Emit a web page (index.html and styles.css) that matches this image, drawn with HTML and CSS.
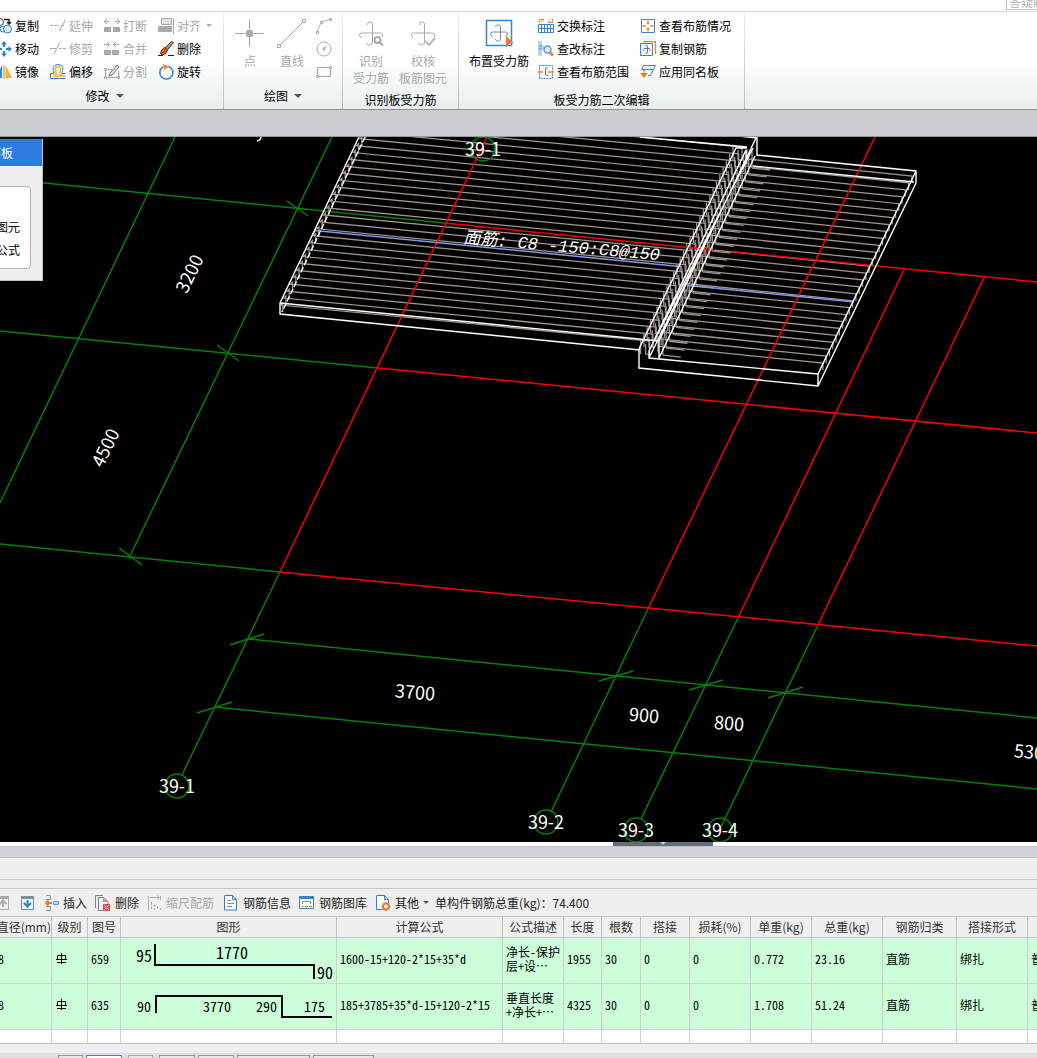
FILE: index.html
```html
<!DOCTYPE html>
<html lang="zh-CN">
<head>
<meta charset="utf-8">
<title>板受力筋</title>
<link rel="stylesheet" href="styles.css">
</head>
<body>
<header class="topbar"><button class="search">答疑解</button></header>

<nav class="ribbon">
  <section class="group group-modify">
    <div class="tools modify-grid">
      <button class="tool"><svg class="icon-cut" viewBox="4 0 12 16" fill="none"><circle cx="4" cy="4" r="3.500" stroke="#3d4a55"/><circle cx="7" cy="11" r="3" fill="#d6ecfa" stroke="#3c87c8"/><circle cx="11.500" cy="11" r="4" fill="#d6ecfa" stroke="#2f7cc0"/><path d="M8 1.500h5V5M11 4l2 2 2-2" stroke="#222" stroke-width="1.500"/></svg>复制</button>
      <button class="tool" disabled><svg class="icon" viewBox="0 0 16 16" fill="none" stroke="#a9a9a9"><path d="M0 7.500h9" stroke-dasharray="3 1"/><path d="M9.500 13L15.500 2M11 7.500h3"/></svg>延伸</button>
      <button class="tool" disabled><svg class="icon" viewBox="0 0 16 16" fill="#a9a9a9"><path d="M0 9h7v5H0zM9 9h7v5H9z"/><path d="M0 3.500h5M3 1L0.500 3.500L3 6M16 3.500h-5M13 1l2.500 2.500L13 6" fill="none" stroke="#a9a9a9"/></svg>打断</button>
      <button class="tool" disabled><svg class="icon" viewBox="0 0 16 16"><path d="M3.500.500h10v6h-10z" fill="#e3e3e3" stroke="#a9a9a9"/><path d="M0 8h14v6H0z" fill="#a9a9a9"/><path d="M15.500 0v16" stroke="#a9a9a9"/></svg>对齐<i class="caret caret-off"></i></button>

      <button class="tool"><svg class="icon-cut" viewBox="4 0 12 16" fill="#2f80d0"><path d="M8 0l3 3.500H9V6H7V3.500H5zM8 16l-3-3.500h2V10h2v2.500h2zM16 8l-3.500 3V9H10V7h2.500V5zM0 8l3.500-3v2H6v2H3.500v2z"/></svg>移动</button>
      <button class="tool" disabled><svg class="icon" viewBox="0 0 16 16" fill="none" stroke="#a9a9a9"><path d="M0 7.500h6M4 13L9.500 2"/><path d="M9 7.500h7" stroke-dasharray="3 1"/></svg>修剪</button>
      <button class="tool" disabled><svg class="icon" viewBox="0 0 16 16" fill="#a9a9a9"><path d="M0 9h7v5H0zM8 9h7v5H8z"/><path d="M0 3.500h5M3 1l2.500 2.500L3 6M15 3.500H9M12 1L9.500 3.500L12 6" fill="none" stroke="#a9a9a9"/></svg>合并</button>
      <button class="tool"><svg class="icon" viewBox="0 0 16 16"><path d="M13.500.500l2 1L9.500 9 7 7z" fill="#b9905f" stroke="#3c3028"/><path d="M6.500 6.500l3 3-2 3-3 1.500-2-1 1-4z" fill="#d8541b" stroke="#5a3320"/><path d="M0 14.500h5M10 14.500h6" stroke="#222"/></svg>删除</button>

      <button class="tool"><svg class="icon-cut" viewBox="4 0 12 16"><path d="M6 1v13H0z" fill="#3684d8"/><path d="M8 1v14" stroke="#8c969f"/><path d="M9.500 1l6.500 13H9.500z" fill="#fbb216"/></svg>镜像</button>
      <button class="tool"><svg class="icon" viewBox="0 0 16 16" fill="none"><path d="M15.500 14.500H.500V9.500H4C4 7 3 6 3 5a5 4.500 0 0 1 10 0c0 1-1 2-1 4.500h3.500" stroke="#2f7cd0"/><path d="M15.500 12H3.500M3.500 11.500c3 0 3-1.500 2.500-3.500C5.500 7 5.500 6 5.500 5a2.500 2.500 0 0 1 5 0c0 1 0 2-.500 3-.500 2 1 3.500 2.500 3.500" stroke="#fbb216" stroke-width="1.500"/></svg>偏移</button>
      <button class="tool" disabled><svg class="icon" viewBox="0 0 16 16" fill="none" stroke="#a9a9a9"><path d="M1.500 13.500v-8H8M1.500 13.500h13V7"/><path d="M.500 12.500h2v2h-2zM13.500 12.500h2v2h-2zM.500 4.500h2v2h-2z" fill="#fff"/><path d="M13 1l2 2-7 8-3 1 1-3z" fill="#ddd" stroke="#777"/></svg>分割</button>
      <button class="tool"><svg class="icon" viewBox="0 0 16 16" fill="none"><path d="M10 2.300a6.500 6.500 0 1 1-5 .700" stroke="#3684d8" stroke-width="1.500"/><path d="M5 0l6 2.500L6 6z" fill="#f58220"/></svg>旋转</button>
    </div>
    <p class="caption">修改<i class="caret"></i></p>
  </section>

  <section class="group group-draw">
    <div class="tools draw-row">
      <button class="big" disabled><svg class="icon-big" viewBox="0 0 30 30" stroke="#a9a9a9"><path d="M14.500 1v10M14.500 19v10M0 15.500h10M19 15.500h10"/><circle cx="14.500" cy="15.500" r="3.500" fill="#a9a9a9"/></svg>点</button>
      <button class="big" disabled><svg class="icon-big" viewBox="0 0 30 30" fill="none" stroke="#a9a9a9"><path d="M3 27L27 3"/><path d="M.500 26.500h3v3h-3zM25.500 1.500h3v3h-3z" fill="#fff"/></svg>直线</button>
      <div class="shapes">
        <button class="mini" aria-label="弧" disabled><svg class="icon" viewBox="0 0 16 16" fill="none" stroke="#a9a9a9"><path d="M1.500 14C2 7 7 2 14 1.500"/><path d="M.500 13.500h2v2h-2zM4.500 3.500h2v2h-2zM13.500.500h2v2h-2z" fill="#fff"/></svg></button>
        <button class="mini" aria-label="圆" disabled><svg class="icon" viewBox="0 0 16 16" fill="none" stroke="#a9a9a9"><circle cx="8" cy="8" r="7"/><path d="M8 8l3-3M7 7h2v2H7z"/></svg></button>
        <button class="mini" aria-label="矩形" disabled><svg class="icon" viewBox="0 0 16 16" fill="none" stroke="#a9a9a9"><path d="M1.500 3.500h13v9h-13z"/><path d="M.500 11.500h2v2h-2zM13.500 2.500h2v2h-2z" fill="#fff"/></svg></button>
      </div>
    </div>
    <p class="caption">绘图<i class="caret"></i></p>
  </section>

  <section class="group group-check">
    <div class="tools check-row">
      <button class="big" disabled><svg class="icon-big" viewBox="0 0 30 30" fill="none" stroke="#a9a9a9"><path d="M11.500 7q0-3 2-3h1q2 0 2 2v15M5.500 20q-2-1-2-3t2-2h19q2 0 2 2v2M16.500 20v4q0 3-3 3t-3-2"/><circle cx="21.500" cy="22" r="3" stroke-width="2"/><path d="M24 24.500l3 3" stroke-width="2"/></svg>识别<br>受力筋</button>
      <button class="big" disabled><svg class="icon-big" viewBox="0 0 30 30" fill="none" stroke="#a9a9a9"><path d="M11.500 7q0-3 2-3h1q2 0 2 2v15M5.500 20q-2-1-2-3t2-2h19q2 0 2 2v2M16.500 20v4q0 3-3 3t-3-2"/><path d="M17 23l4 4 6-7" stroke="#bbb" stroke-width="2"/></svg>校核<br>板筋图元</button>
    </div>
    <p class="caption caption-low">识别板受力筋</p>
  </section>

  <section class="group group-edit">
    <div class="tools edit-row">
      <button class="big"><svg class="icon-big" viewBox="0 0 30 30" fill="none"><path d="M2.500 2.500h25v25h-25z" fill="#fff" stroke="#3684d8" stroke-width="1.500"/><path d="M11.500 9q0-2 2-2h1q2 0 2 2v12q0 2-2 2h-1q-2 0-2-2M8.500 18.500q-2-1-2-2.500t2-2h13q2 0 2 2t-2 2.500" stroke="#7d878f"/><path d="M22 18l8 7-4 .500-4 4z" fill="#f0782a"/></svg>布置受力筋</button>
      <div class="edit-grid">
        <button class="tool"><svg class="icon" viewBox="0 0 16 16" fill="none"><path d="M.500 6.500h15v8H.500zM.500 10.500h15M3.500 7v8M6.500 7v8M9.500 7v8M12.500 7v8" stroke="#3684d8"/><path d="M1.500 5V1.500H6L3.500 4M14.500 1v3.500H10L13 1.500" stroke="#f58220"/></svg>交换标注</button>
        <button class="tool"><svg class="icon" viewBox="0 0 16 16" fill="none"><path d="M1.500 1.500h13v13h-13z" stroke="#3684d8"/><path d="M8 2.500v3.500M8 10v3.500M2.500 8H6M10 8h3.500" stroke="#f58220" stroke-width="1.500"/><path d="M6.500 4.500L8 6.500l1.500-2M6.500 11.500L8 9.500l1.500 2" stroke="#f58220"/></svg>查看布筋情况</button>
        <button class="tool"><svg class="icon" viewBox="0 0 16 16" fill="none"><path d="M0 0h4v4l2 1v3L4 9v6H0z" fill="#b8d2f2"/><path d="M1 5h3M1 8h3" stroke="#3684d8"/><circle cx="9.500" cy="8.500" r="3.500" fill="#dcecfc" stroke="#6397d6" stroke-width="1.500"/><path d="M12 11.500l3 3" stroke="#f58220" stroke-width="3"/></svg>查改标注</button>
        <button class="tool"><svg class="icon" viewBox="0 0 16 16" fill="none"><path d="M3 .500h12.500V13" stroke="#f58220" stroke-width="1.500"/><path d="M.500 2.500h12v12H.500z" fill="#fff" stroke="#3684d8"/><path d="M5.500 5q2-1.500 2 1v5q0 2-2 1M4 10q-1.500-2 0-2.500h5q2 0 .500 2.500" stroke="#69737c"/></svg>复制钢筋</button>
        <button class="tool"><svg class="icon" viewBox="0 0 16 16" fill="none"><path d="M1.500 1.500h13v13h-13z" stroke="#3684d8" stroke-dasharray="2 1"/><path d="M0 8h5M10 8h6" stroke="#f58220" stroke-width="1.500"/><path d="M10 4Q7 3 7.500 6v5q1 1 3 0" stroke="#69737c"/></svg>查看布筋范围</button>
        <button class="tool"><svg class="icon" viewBox="0 0 16 16" fill="none"><path d="M3.500 1.500h12l-2 4H1.500z" fill="#eaf3fd" stroke="#3684d8"/><path d="M13.500 5.500l-3 6H8M4 5v5" stroke="#3684d8"/><path d="M0 9h8l-4 5z" fill="#f58220"/></svg>应用同名板</button>
      </div>
    </div>
    <p class="caption caption-low">板受力筋二次编辑</p>
  </section>
</nav>
<div class="band"></div>

<main class="viewport">
  <svg class="scene" viewBox="0 137 1037 705">
    <defs>
      <g id="a1"><path d="M375 118v-9l-2 2 369 36v13M733 147v13M738 150v10h5"/></g>
      <g id="a2"><use href="#a1"/><use href="#a1" x="-3.300" y="6.930"/></g>
      <g id="a4"><use href="#a2"/><use href="#a2" x="-6.600" y="13.860"/></g>
      <g id="a8"><use href="#a4"/><use href="#a4" x="-13.200" y="27.720"/></g>
      <g id="a16"><use href="#a8"/><use href="#a8" x="-26.400" y="55.440"/></g>
      <g id="b1"><path d="M747 149v16M752 150v18M747 159l165 17v7M752 168l18 2"/></g>
      <g id="b2"><use href="#b1"/><use href="#b1" x="-3.300" y="6.930"/></g>
      <g id="b4"><use href="#b2"/><use href="#b2" x="-6.600" y="13.860"/></g>
      <g id="b8"><use href="#b4"/><use href="#b4" x="-13.200" y="27.720"/></g>
      <g id="b16"><use href="#b8"/><use href="#b8" x="-26.400" y="55.440"/></g>
    </defs>
    <g class="bars">
      <use href="#a16"/><use href="#a8" x="-52.800" y="110.880"/><use href="#a4" x="-79.200" y="166.320"/><use href="#a1" x="-92.400" y="194.040"/>
      <use href="#b16"/><use href="#b8" x="-52.800" y="110.880"/><use href="#b4" x="-79.200" y="166.320"/>
    </g>
    <g class="green">
      <path d="M0 178.500L447 223.300M0 331L378 368M0 544L280 572M248 639L1037 718M215 707L1037 789"/>
      <path d="M175 137L0 503M332 137L129 558M280 572L182 775M648 609L551 812M738 618L641 819M818 625L720 829"/>
      <path d="M287 201l21 15M217 345l22 16M119 548l23 17M230 645l34-11M197 713l35-11M599 681l34-10M689 690l34-10M768 698l35-11"/>
    </g>
    <g class="red">
      <path d="M447 223.300L714 250M731 251.500L1037 282M378 368L1037 433M280 572L1037 646"/>
      <path d="M487 137L280 572M875 137L648 609M905 268L738 618M985 276L818 625"/>
    </g>
    <path class="blue" d="M313 235l2-4.500L682 266.700M688 285.500L854 302"/>
    <g class="white">
      <path d="M359 137L280 303v11L640 350M280 303L659 341M640 137L747 147M700 132L757 138v17L916 171v12L818 386L639 368v-19L736 148h11M916 171L818 374v12M753 166L914 182M818 374L649 358v-7L746 150v14M659 341v17L755 156M659 341L756 138M649 351L753 148M649 358L749 154"/>
      <path d="M365 137L282 312" stroke-dasharray="6 2"/>
    </g>
    <g class="marks">
      <circle cx="483" cy="149" r="12"/><circle cx="177" cy="786" r="12"/><circle cx="546" cy="822" r="12"/><circle cx="636" cy="830" r="12"/><circle cx="720" cy="830" r="12"/>
    </g>
    <g class="labels">
      <text x="483" y="156">39-1</text><text x="177" y="793">39-1</text><text x="546" y="829">39-2</text><text x="636" y="837">39-3</text><text x="720" y="837">39-4</text>
      <text transform="translate(415 693) rotate(5)" y="6">3700</text>
      <text transform="translate(644 716) rotate(5)" y="6">900</text>
      <text transform="translate(729 724) rotate(5)" y="6">800</text>
      <text transform="translate(1034 753) rotate(5)" y="6">5300</text>
      <text transform="translate(190 274) rotate(-64)" y="6">3200</text>
      <text transform="translate(106 448) rotate(-64)" y="6">4500</text>
    </g>
    <text class="note" transform="translate(463 243) rotate(5)">面筋: C8 -150:C8@150</text>
    <path class="white" d="M261 137q0 3-4 4"/>
  </svg>
  <aside class="panel">
    <h2 class="panel-title"><span>面板</span></h2>
    <div class="panel-box"><span>图元</span><span>公式</span></div>
  </aside>
</main>

<div class="splitter"><button class="handle" aria-label="收起"><i class="caret caret-light"></i></button></div>
<div class="dock-head"></div>
<div class="dock-bar"></div>
<div class="dock-gap"></div>

<div class="toolbar">
  <button class="item up" aria-label="上移" disabled><svg width="9" height="14" viewBox="4 0 9 14"><path d="M0 .500h12.500v13H0z" fill="#f2f2f2" stroke="#aaa"/><path d="M0 0h13v3H0z" fill="#aaa"/><path d="M7 11V5M3.500 8L7 4.500 10.500 8" fill="none" stroke="#aaa" stroke-width="2"/></svg></button>
  <button class="item down" aria-label="下移"><svg width="13" height="14" viewBox="0 0 13 14"><path d="M.500.500h12v13H.500z" fill="#f4f8fc" stroke="#7890a0"/><path d="M0 0h13v3H0z" fill="#7890a0"/><path d="M6.500 4v6M3 7l3.500 3.500L10 7" fill="none" stroke="#2f80d8" stroke-width="2"/></svg></button>
  <button class="item insert"><svg width="14" height="16" viewBox="0 0 14 16" fill="none"><path d="M1 .500h4.500v4H1M1 11.500h4.500v4H1" stroke="#8a96a0"/><path d="M1 8h6M3.500 5.500L1 8l2.500 2.500" stroke="#f0782a" stroke-width="2"/><path d="M8.500 6.500h5v3h-5z" fill="#bdd9f5" stroke="#5b9bdc"/></svg>插入</button>
  <button class="item remove"><svg width="15" height="16" viewBox="0 0 15 16" fill="none"><path d="M.500 13V.500H8M3.500 15.500v-13H9l4 4v9z" stroke="#7b8790"/><path d="M8 2.500L13 7H8z" fill="#9aa4ac"/><path d="M8 9h7v7H8z" fill="#d94b4b"/><path d="M9.500 10.500l4 4M13.500 10.500l-4 4" stroke="#fff"/></svg>删除</button>
  <button class="item scale" disabled><svg width="14" height="16" viewBox="0 0 14 16" fill="none" stroke="#b0b0b0"><path d="M.500 1v14M12.500 1v4M2 2.500h9M9 .500l2.500 2L9 4.500"/><path d="M3.500 7v8M6.500 9v6M9.500 11v4M12.500 13v2" stroke-dasharray="3 1"/></svg>缩尺配筋</button>
  <button class="item info"><svg width="14" height="16" viewBox="0 0 14 16" fill="none" stroke="#2f80d0"><path d="M.500.500h8l4 4v10.500H.500z" fill="#fff"/><path d="M8.500.500v4h4"/><path d="M3 5.500h4M3 8.500h7M3 11.500h5" stroke="#7890a0"/></svg>钢筋信息</button>
  <button class="item library"><svg width="15" height="14" viewBox="0 0 15 14" fill="none"><path d="M.500.500h14v12H.500z" fill="#fff" stroke="#3c80c8"/><path d="M0 0h15v3H0z" fill="#3c80c8"/><path d="M3.500 8V5.500h8V8" stroke="#7890a0"/><path d="M2 10.500h3" stroke="#f5a020"/><path d="M6 10.500h3" stroke="#50b050"/><path d="M10 10.500h3" stroke="#e05030"/></svg>钢筋图库</button>
  <button class="item other"><svg width="15" height="16" viewBox="0 0 15 16" fill="none"><path d="M7 14.500H.500V.500h8l4 4V8" fill="#fff" stroke="#2f80d0"/><path d="M8.500.500v4h4" stroke="#2f80d0"/><circle cx="10" cy="11.500" r="3" stroke="#f07820" stroke-width="2"/><path d="M10 7v2M10 14v2M5.500 11.500h2M12.500 11.500h2M7 8.500l1 1M13 8.500l-1 1M7 14.500l1-1M13 14.500l-1-1" stroke="#f07820"/></svg>其他<i class="caret caret-small"></i></button>
  <span class="total">单构件钢筋总重(kg)：74.400</span>
</div>

<table class="grid">
  <colgroup><col class="w52"><col class="w36"><col class="w33"><col class="w216"><col class="w166"><col class="w61"><col class="w38"><col class="w39"><col class="w49"><col class="w61"><col class="w61"><col class="w71"><col class="w74"><col class="w71"><col></colgroup>
  <thead><tr><th><span class="clip-left">直径(mm)</span></th><th>级别</th><th>图号</th><th>图形</th><th>计算公式</th><th>公式描述</th><th>长度</th><th>根数</th><th>搭接</th><th>损耗(%)</th><th>单重(kg)</th><th>总重(kg)</th><th>钢筋归类</th><th>搭接形式</th><th></th></tr></thead>
  <tbody>
    <tr><td class="edge">8</td><td><svg class="grade" viewBox="0 0 11 11"><path d="M5.500 0v11M1.500 2.500v4h8v-4zM0 6.500h11M1 9.500h9"/></svg></td><td>659</td>
      <td class="shape"><svg viewBox="0 0 215 45"><path d="M34 6v21h159v14"/><g class="t16"><text x="15" y="24">95</text><text x="95" y="21">1770</text><text x="196" y="41">90</text></g></svg></td>
      <td>1600-15+120-2*15+35*d</td><td class="desc">净长-保护<br>层+设…</td><td>1955</td><td>30</td><td>0</td><td>0</td><td>0.772</td><td>23.16</td><td>直筋</td><td>绑扎</td><td>普</td></tr>
    <tr><td class="edge">8</td><td><svg class="grade" viewBox="0 0 11 11"><path d="M5.500 0v11M1.500 2.500v4h8v-4zM0 6.500h11M1 9.500h9"/></svg></td><td>635</td>
      <td class="shape"><svg viewBox="0 0 215 45"><path d="M35 29V12h126v21h50"/><g class="t14"><text x="16" y="28">90</text><text x="82" y="28">3770</text><text x="135" y="28">290</text><text x="183" y="28">175</text></g></svg></td>
      <td>185+3785+35*d-15+120-2*15</td><td class="desc">垂直长度<br>+净长+…</td><td>4325</td><td>30</td><td>0</td><td>0</td><td>1.708</td><td>51.24</td><td>直筋</td><td>绑扎</td><td>普</td></tr>
    <tr class="blank"><td></td><td></td><td></td><td></td><td></td><td></td><td></td><td></td><td></td><td></td><td></td><td></td><td></td><td></td><td></td></tr>
  </tbody>
</table>
<div class="under"></div>
<footer class="status"><i class="tab w25"></i><i class="tab active w36"></i><i class="tab faint w25"></i><i class="tab w36"></i><i class="tab w36"></i><i class="tab w73"></i><i class="tab w61"></i></footer>
</body>
</html>
```
FILE: styles.css
```css
* { box-sizing: border-box; }
body {
  margin: 0;
  background: #efefef;
  color: #000;
  font: 12px/18px "Noto Sans CJK SC", sans-serif;
  overflow: hidden;
}
button {
  border: 0;
  padding: 0;
  background: none;
  color: inherit;
  font: inherit;
  white-space: nowrap;
}
button:disabled { color: #a9a9a9; }
svg { display: block; flex: none; }
p, h2 { margin: 0; font-size: 12px; font-weight: 400; }

.topbar {
  display: flex;
  justify-content: flex-end;
  height: 12px;
  background: #fff;
  border-bottom: 1px solid #d9d9d9;
}
.search {
  display: flex;
  align-items: flex-end;
  width: 31px;
  height: 10px;
  padding-left: 2px;
  border: 1px solid #bdbdbd;
  border-width: 0 0 1px 1px;
  color: #b5b5b5;
  line-height: 14px;
  overflow: hidden;
}

.ribbon {
  display: flex;
  height: 98px;
  background: linear-gradient(#fff 50%, #e7eeee);
  border-bottom: 1px solid #8b9192;
}
.group {
  display: flex;
  flex-direction: column;
  padding-top: 2px;
  border-right: 1px solid;
  border-image: linear-gradient(#eee, #b8bcbc) 1;
}
.group-modify { width: 224px; }
.group-draw { width: 119px; }
.group-check { width: 116px; }
.group-edit { width: 286px; }
.tools { height: 69px; }
.caption {
  display: flex;
  align-items: center;
  justify-content: center;
  gap: 6px;
  height: 26px;
}
.caption-low { align-items: flex-end; }
.group-modify .caption { padding-right: 14px; }
.caret {
  border: 4px solid transparent;
  border-top-color: #555;
  border-bottom: 0;
}
.caret-off { border-width: 3px; border-top-color: #b0b0b0; border-bottom: 0; margin-left: 2px; }
.caret-small { border-width: 3px; border-bottom: 0; }
.caret-light { border-width: 3px; border-top-color: #c8ccd0; border-bottom: 0; }
.tool { display: flex; align-items: center; gap: 3px; height: 23px; }
.icon { width: 16px; height: 16px; }
.icon-cut { width: 12px; height: 16px; }
.icon-big { width: 30px; height: 30px; margin-bottom: 4px; }
.modify-grid { display: grid; grid-template-columns: 50px 54px 54px 1fr; }
.draw-row { display: grid; grid-template-columns: 42px 39px 16px; justify-items: start; padding-left: 11px; }
.big {
  display: flex;
  flex-direction: column;
  align-items: center;
  justify-content: flex-start;
  padding-top: 4px;
  height: 86px;
  line-height: 17px;
  text-align: center;
}
.shapes { display: grid; grid-template-rows: 23px 23px 23px; align-items: center; }
.mini { height: 16px; }
.check-row { display: flex; gap: 10px; padding-left: 10px; }
.edit-row { display: flex; gap: 9px; padding-left: 10px; }
.edit-grid { display: grid; grid-template-columns: 102px auto; }

.band {
  height: 27px;
  background: #c9ccd1;
  border-bottom: 1px solid #959b9f;
}

.viewport { position: relative; background: #000; overflow: hidden; }
.scene { width: 100%; height: auto; fill: none; }
.bars { stroke: #a3948e; stroke-width: 1.3; }
.green, .marks { stroke: #078007; }
.red { stroke: #f80000; }
.green, .red, .blue { stroke-width: 1.5; }
.marks { stroke-width: 1.5; }
.blue { stroke: #7f9bea; }
.white { stroke: #fff; stroke-width: 1.4; }
.labels { fill: #fff; font-size: 18px; text-anchor: middle; }
.note { fill: #fff; font: italic 17px "Liberation Mono", "Noto Sans CJK SC", monospace; }

.panel {
  position: absolute;
  top: 2px;
  left: 0;
  width: 43px;
  height: 142px;
  background: #efefef;
  border: 1px solid #b9c4d2;
  border-width: 0 1px 1px 0;
  overflow: hidden;
}
.panel-title {
  display: flex;
  justify-content: flex-end;
  height: 27px;
  margin-right: -1px;
  padding-right: 30px;
  background: #2d7de0;
  color: #fff;
  line-height: 27px;
  white-space: nowrap;
}
.panel-box {
  display: flex;
  flex-direction: column;
  align-items: flex-end;
  width: 31px;
  height: 83px;
  margin-top: 20px;
  padding: 28px 10px 0 0;
  background: #fff;
  border: 1px solid #b5b5b5;
  border-left: 0;
  border-radius: 0 4px 4px 0;
  line-height: 23px;
  white-space: nowrap;
}

.splitter { display: flex; justify-content: center; padding-left: 289px; height: 4px; background: #fff; }
.handle { display: flex; justify-content: center; width: 100px; height: 4px; background: #646c78; }
.dock-head { height: 12px; background: #d3d4da; border: 1px solid #c2c2c6; border-width: 1px 0; }
.dock-bar { height: 22px; border-bottom: 1px solid #c5c5c5; }
.dock-gap { height: 9px; border-bottom: 1px solid #c5c5c5; }

.toolbar { display: flex; align-items: center; height: 27px; color: #222; }
.item { display: flex; align-items: center; gap: 5px; }
.down { margin-left: 12px; }
.insert { margin-left: 11px; gap: 4px; }
.remove, .library { margin-left: 8px; }
.info { margin-left: 10px; }
.scale, .other { margin-left: 9px; }
.scale, .other { gap: 4px; }
.total { margin-left: 6px; }

.grid {
  width: 100%;
  table-layout: fixed;
  border-collapse: separate;
  border-spacing: 0;
  border-top: 1px solid #c0c0c0;
}
.w25 { width: 25px; } .w33 { width: 33px; } .w36 { width: 36px; } .w38 { width: 38px; }
.w39 { width: 39px; } .w49 { width: 49px; } .w52 { width: 52px; } .w61 { width: 61px; }
.w71 { width: 71px; } .w73 { width: 73px; } .w74 { width: 74px; } .w166 { width: 166px; }
.w216 { width: 216px; }
th, td {
  padding: 0;
  border-right: 1px solid #cfd3cf;
  border-bottom: 1px solid #cfd3cf;
  overflow: hidden;
  white-space: nowrap;
}
th {
  height: 21px;
  color: #333;
  font-weight: 400;
  text-align: center;
  background: #efefef;
  border-color: #c0c0c0;
}
.clip-left { display: flex; justify-content: flex-end; }
td {
  height: 46px;
  padding: 0 0 4px 3px;
  background: #ccffd9;
  font-family: "Noto Sans Mono CJK SC", "Noto Sans CJK SC", monospace;
}
th:last-child, td:last-child { border-right: 0; }
.edge { padding-left: 0; text-indent: -2px; }
.desc { line-height: 14px; }
.grade { width: 11px; height: 11px; margin-left: 1px; fill: none; stroke: #000; }
.shape { padding: 0; }
.shape svg { width: 215px; height: 45px; fill: none; stroke: #000; stroke-width: 2; }
.shape text { fill: #000; stroke: none; }
.t16 { font-size: 16px; }
.t14 { font-size: 14px; }
.blank td { height: 14px; padding: 0; background: #fff; border-bottom-color: #c0c0c0; }

.under { height: 9px; }
.status { display: flex; gap: 3px; height: 5px; padding: 2px 0 0 58px; background: #dedee1; overflow: hidden; }
.tab { flex: none; height: 8px; border: 1px solid #999; background: #e6e6e6; }
.active { border-color: #2f8fe8; background: #fff; margin-right: 3px; }
.faint { border-color: #aaa; margin-right: 3px; }
```
